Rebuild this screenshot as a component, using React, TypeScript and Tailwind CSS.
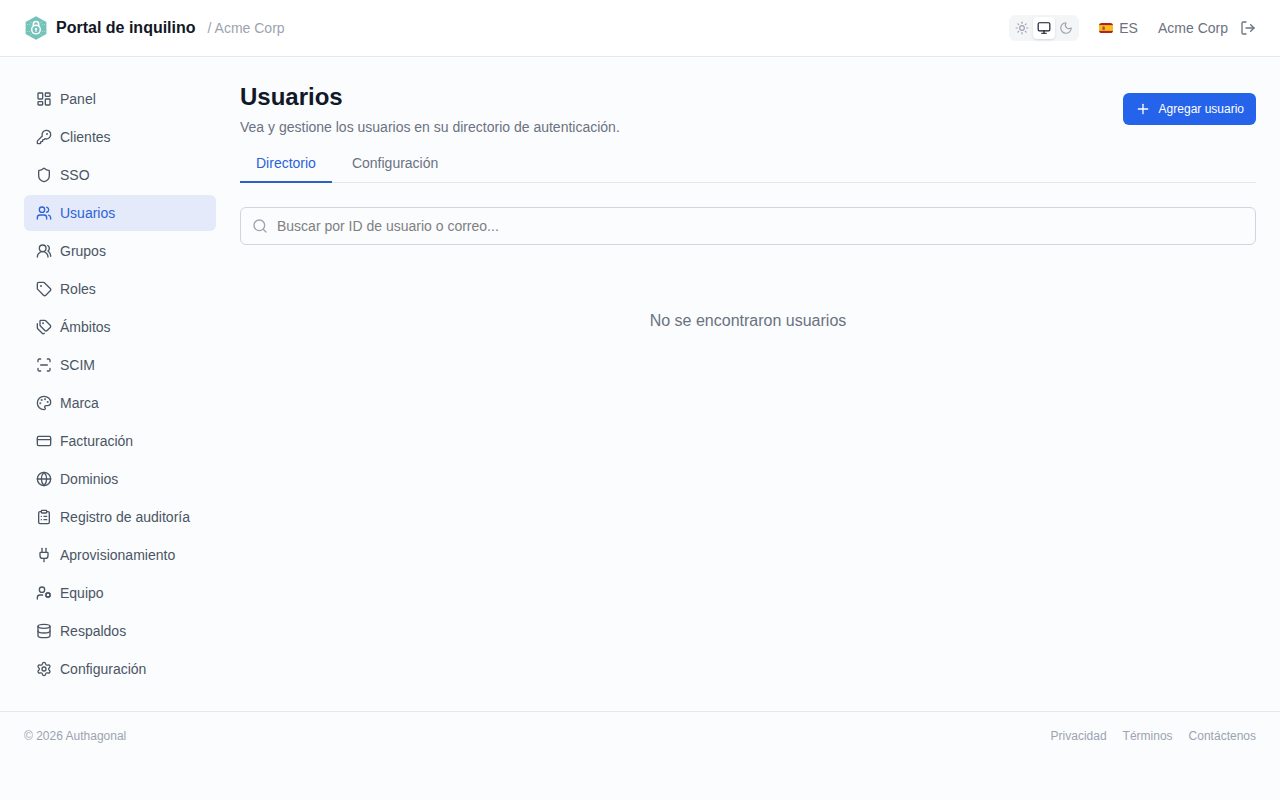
import {
  ClipboardList,
  CreditCard,
  Database,
  Globe,
  KeyRound,
  LayoutDashboard,
  LogOut,
  LucideIcon,
  Monitor,
  Moon,
  Palette,
  Plug,
  Plus,
  ScanLine,
  Search,
  Settings,
  Shield,
  Sun,
  Tag,
  Tags,
  UserCog,
  Users,
  UsersRound,
} from 'lucide-react';
import clsx from 'clsx';

type NavItem = {
  label: string;
  icon: LucideIcon;
  active?: boolean;
};

const NAV_ITEMS: NavItem[] = [
  { label: 'Panel', icon: LayoutDashboard },
  { label: 'Clientes', icon: KeyRound },
  { label: 'SSO', icon: Shield },
  { label: 'Usuarios', icon: Users, active: true },
  { label: 'Grupos', icon: UsersRound },
  { label: 'Roles', icon: Tag },
  { label: 'Ámbitos', icon: Tags },
  { label: 'SCIM', icon: ScanLine },
  { label: 'Marca', icon: Palette },
  { label: 'Facturación', icon: CreditCard },
  { label: 'Dominios', icon: Globe },
  { label: 'Registro de auditoría', icon: ClipboardList },
  { label: 'Aprovisionamiento', icon: Plug },
  { label: 'Equipo', icon: UserCog },
  { label: 'Respaldos', icon: Database },
  { label: 'Configuración', icon: Settings },
];

const THEMES = [
  { name: 'Claro', icon: Sun },
  { name: 'Sistema', icon: Monitor },
  { name: 'Oscuro', icon: Moon },
];

function Logo() {
  return (
    <svg viewBox="0 0 24 24" className="size-6">
      <path d="M12 0.2 22.4 6.1v11.8L12 23.8 1.6 17.900V6.100Z" fill="#74c2b9" />
      <g stroke="#b9e1dc" strokeWidth="0.7" strokeDasharray="1.200 0.800" fill="none">
        <path d="M3 8.500h3l1.500 1.500M3 15.500h3l1.500-1M21 8.500h-2.500L17 10M21 15.500h-3l-1-1M5.500 5.500l3 2M18.500 5.500l-3 2M6 19l2.500-1.500M18 19l-2.500-1.500" />
      </g>
      <path d="M9.300 10.500V8.200a2.700 2.700 0 0 1 5.400 0v2.300" fill="none" stroke="#fff" strokeWidth="1.500" />
      <circle cx="12" cy="13.600" r="4.300" fill="#74c2b9" stroke="#fff" strokeWidth="1.400" />
      <circle cx="12" cy="13" r="1.200" fill="#fff" />
      <path d="M12 13v2.600" stroke="#fff" strokeWidth="1.100" strokeLinecap="round" />
    </svg>
  );
}

function SpainFlag() {
  return (
    <svg viewBox="0 0 14 10" className="h-2.5 w-3.5">
      <path d="M2.800 0h8.400Q14 0 14 2.600H0Q0 0 2.800 0Z" fill="#b4240f" />
      <path d="M0 7.400h14Q14 10 11.200 10H2.800Q0 10 0 7.400Z" fill="#b4240f" />
      <rect y="2.500" width="14" height="5" fill="#f8c013" />
      <rect x="3.300" y="4" width="2.600" height="2.900" rx="0.600" fill="#b8552c" />
      <rect x="3.900" y="3" width="1.400" height="1" fill="#c8702a" />
    </svg>
  );
}

function Header() {
  return (
    <header className="flex h-[57px] items-center justify-between border-b border-[#e5e7eb] bg-white px-6">
      <div className="flex items-center">
        <Logo />
        <span className="ml-2 text-base font-bold text-[#111827]">Portal de inquilino</span>
        <span className="ml-3 text-sm text-[#9ca3af]">/ Acme Corp</span>
      </div>

      <div className="flex items-center gap-5 text-sm text-[#6b7280]">
        <div className="flex rounded-md bg-[#f4f5f7] p-0.5">
          {THEMES.map(({ name, icon: Icon }) => (
            <button
              key={name}
              aria-label={name}
              className={clsx(
                'rounded p-1',
                name === 'Sistema' ? 'bg-white text-[#111827] shadow-sm' : 'text-[#9ca3af]'
              )}
            >
              <Icon size={14} />
            </button>
          ))}
        </div>
        <button className="flex items-center gap-1.5">
          <SpainFlag />
          ES
        </button>
        <div className="flex items-center gap-3">
          <span>Acme Corp</span>
          <LogOut size={16} />
        </div>
      </div>
    </header>
  );
}

function Sidebar() {
  return (
    <nav className="flex w-48 shrink-0 flex-col gap-0.5">
      {NAV_ITEMS.map(({ label, icon: Icon, active }) => (
        <a
          key={label}
          className={clsx(
            'flex items-center gap-2 rounded-md px-3 py-2 text-sm',
            active ? 'bg-[#e4eaf9] text-[#2b63d9]' : 'text-[#4b5563]'
          )}
        >
          <Icon size={16} />
          {label}
        </a>
      ))}
    </nav>
  );
}

export default function App() {
  return (
    <div className="min-h-screen bg-[#fafcfe] font-['Liberation_Sans',Arial,sans-serif]">
      <Header />

      <div className="flex gap-6 px-6 py-6">
        <Sidebar />

        <main className="min-w-0 flex-1">
          <div className="flex items-center justify-between">
            <div>
              <h1 className="text-2xl font-bold text-[#111827]">Usuarios</h1>
              <p className="mt-1 text-sm text-[#6b7280]">
                Vea y gestione los usuarios en su directorio de autenticación.
              </p>
            </div>
            <button className="flex h-8 items-center gap-2 rounded-md bg-[#2563eb] px-3 text-xs text-white">
              <Plus size={16} />
              Agregar usuario
            </button>
          </div>

          <div className="mt-2 flex gap-1 border-b border-[#e5e7eb] text-sm">
            <button className="-mb-px border-b-2 border-[#2b62c0] px-4 py-2 text-[#2b63d9]">Directorio</button>
            <button className="-mb-px border-b-2 border-transparent px-4 py-2 text-[#6b7280]">Configuración</button>
          </div>

          <div className="relative mt-6">
            <Search size={16} className="absolute top-[11px] left-3 text-[#9ca3af]" />
            <input
              type="text"
              placeholder="Buscar por ID de usuario o correo..."
              className="block h-[38px] w-full rounded-md border border-[#d1d5db] bg-transparent pr-3 pl-9 text-sm placeholder:text-[#808080]"
            />
          </div>

          <p className="py-16 text-center text-base text-[#6b7280]">No se encontraron usuarios</p>
        </main>
      </div>

      <footer className="flex items-center justify-between border-t border-[#e5e7eb] px-6 py-4 text-xs text-[#9ca3af]">
        <span>© 2026 Authagonal</span>
        <div className="flex gap-4">
          <a>Privacidad</a>
          <a>Términos</a>
          <a>Contáctenos</a>
        </div>
      </footer>
    </div>
  );
}
